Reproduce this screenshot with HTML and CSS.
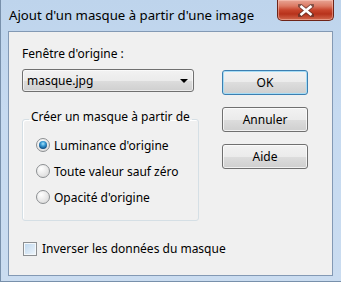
FILE: index.html
```html
<!DOCTYPE html>
<html>

<head>
    <meta charset="UTF-8">
    <title>Ajout d'un masque</title>
    <link rel="stylesheet" href="styles.css">
</head>

<body>
    <!-- dialog window -->
    <div class="window">
        <!-- title bar -->
        <div class="titlebar">
            <span class="title">Ajout d'un masque à partir d'une image</span>
            <div class="close">
                <svg width="16" height="13" viewBox="0 0 16 13">
                    <path d="M2 1.5 L14 11.5 M14 1.5 L2 11.5" stroke="#3b2a28" stroke-width="4.4" stroke-linecap="square" fill="none" opacity="0.55" />
                    <path d="M2.5 2 L13.5 11 M13.5 2 L2.5 11" stroke="#ffffff" stroke-width="2.6" fill="none" />
                </svg>
            </div>
        </div>

        <!-- client area -->
        <div class="client">
            <div class="top">
                <div class="left">
                    <div class="label">Fenêtre d'origine :</div>
                    <div class="combo">
                        <span>masque.jpg</span>
                        <span class="arrow"></span>
                    </div>

                    <fieldset class="group">
                        <legend>Créer un masque à partir de</legend>
                        <div class="radio-row"><span class="radio checked"></span>Luminance d'origine</div>
                        <div class="radio-row"><span class="radio"></span>Toute valeur sauf zéro</div>
                        <div class="radio-row"><span class="radio"></span>Opacité d'origine</div>
                    </fieldset>
                </div>

                <!-- buttons -->
                <div class="buttons">
                    <div class="button default">OK</div>
                    <div class="button">Annuler</div>
                    <div class="button">Aide</div>
                </div>
            </div>

            <div class="check-row"><span class="checkbox"></span>Inverser les données du masque</div>
        </div>
    </div>
</body>

</html>
```

FILE: styles.css
```css
body {
    margin: 0px;
    background-color: #c4d8ef;
}

* {
    box-sizing: border-box;
    font-family: "Noto Sans", "Open Sans", sans-serif;
}

.window {
    width: 341px;
    height: 282px;
    display: flex;
    flex-direction: column;
    overflow: hidden;
    border-left: 1px solid #7890ab;
    border-bottom: 1px solid #7890ab;
    background: linear-gradient(#bed4ec, #c6daf0 40%, #cadcf0);
}

.titlebar {
    height: 31px;
    flex-shrink: 0;
    display: flex;
    justify-content: space-between;
    align-items: flex-start;
    padding-left: 8px;
}

.title {
    font-size: 13.2px;
    line-height: 15px;
    margin-top: 8px;
    white-space: nowrap;
    color: #000;
}

.close {
    width: 57px;
    height: 21px;
    margin-right: 7px;
    display: flex;
    align-items: center;
    justify-content: center;
    border: 1px solid #6e2418;
    border-top: none;
    border-radius: 0 0 5px 5px;
    background: linear-gradient(#e8a595 0%, #dc7a64 30%, #c8452d 50%, #b7321b 70%, #d2694e 100%);
    box-shadow: inset 0 0 0 1px rgba(255, 210, 200, 0.45);
}

.client {
    width: 325px;
    height: 245px;
    margin-left: 7px;
    padding: 14px 0 0 13px;
    border: 1px solid #8399b4;
    background-color: #f0f0f0;
    font-size: 12px;
    line-height: 15px;
    color: #000;
}

.top {
    display: flex;
    gap: 28px;
}

.left {
    width: 172px;
}

.label {
    height: 15px;
    white-space: nowrap;
}

.combo {
    margin-top: 8px;
    height: 23px;
    display: flex;
    align-items: center;
    justify-content: space-between;
    padding: 0 5px 0 4px;
    border: 1px solid #707070;
    border-radius: 3px;
    background: linear-gradient(#f2f2f2 0%, #ebebeb 50%, #dddddd 50%, #cfcfcf 100%);
    box-shadow: inset 0 0 0 1px rgba(255, 255, 255, 0.6);
}

.arrow {
    width: 0;
    height: 0;
    border-left: 4px solid transparent;
    border-right: 4px solid transparent;
    border-top: 4px solid #000;
}

.group {
    width: 170px;
    margin: 17px 0 0 0;
    padding: 2px 6px 10px 6px;
    border: 1px solid #d5dfe5;
    border-radius: 3px;
    box-shadow: inset 1px 1px 0 #ffffff;
}

.group legend {
    padding: 0 2px 6px 2px;
    line-height: 15px;
    white-space: nowrap;
}

.radio-row {
    height: 26px;
    display: flex;
    align-items: center;
    padding-left: 7px;
    white-space: nowrap;
}

.radio {
    width: 14px;
    height: 14px;
    margin-right: 4px;
    border-radius: 50%;
    border: 1px solid #8c8f92;
    background: radial-gradient(circle at 35% 30%, #ffffff 0%, #f0f0f0 35%, #d4d4d4 100%);
    display: flex;
    align-items: center;
    justify-content: center;
}

.radio.checked::after {
    content: "";
    width: 8px;
    height: 8px;
    border-radius: 50%;
    background: radial-gradient(circle at 50% 35%, #a6e3fb 0%, #3a9bd4 35%, #0e4f86 75%, #0b2e55 100%);
}

.buttons {
    margin-top: 24px;
    display: flex;
    flex-direction: column;
    gap: 12px;
}

.button {
    width: 86px;
    height: 25px;
    display: flex;
    align-items: center;
    justify-content: center;
    border: 1px solid #707070;
    border-radius: 3px;
    background: linear-gradient(#f2f2f2 0%, #ebebeb 50%, #dddddd 50%, #cfcfcf 100%);
    box-shadow: inset 0 0 0 1px rgba(255, 255, 255, 0.7);
}

.button.default {
    border-color: #3c7fb1;
    box-shadow: inset 0 0 0 1px #a6dcf5;
}

.check-row {
    margin-top: 20px;
    display: flex;
    align-items: center;
    padding-left: 1px;
    white-space: nowrap;
}

.checkbox {
    width: 14px;
    height: 14px;
    margin-right: 5px;
    border: 1px solid #8c8f92;
    background: linear-gradient(135deg, #bcd6ee 0%, #dbe9f6 60%, #f2f8fc 100%);
    box-shadow: inset 0 0 0 1px #f4f8fb;
}
```
